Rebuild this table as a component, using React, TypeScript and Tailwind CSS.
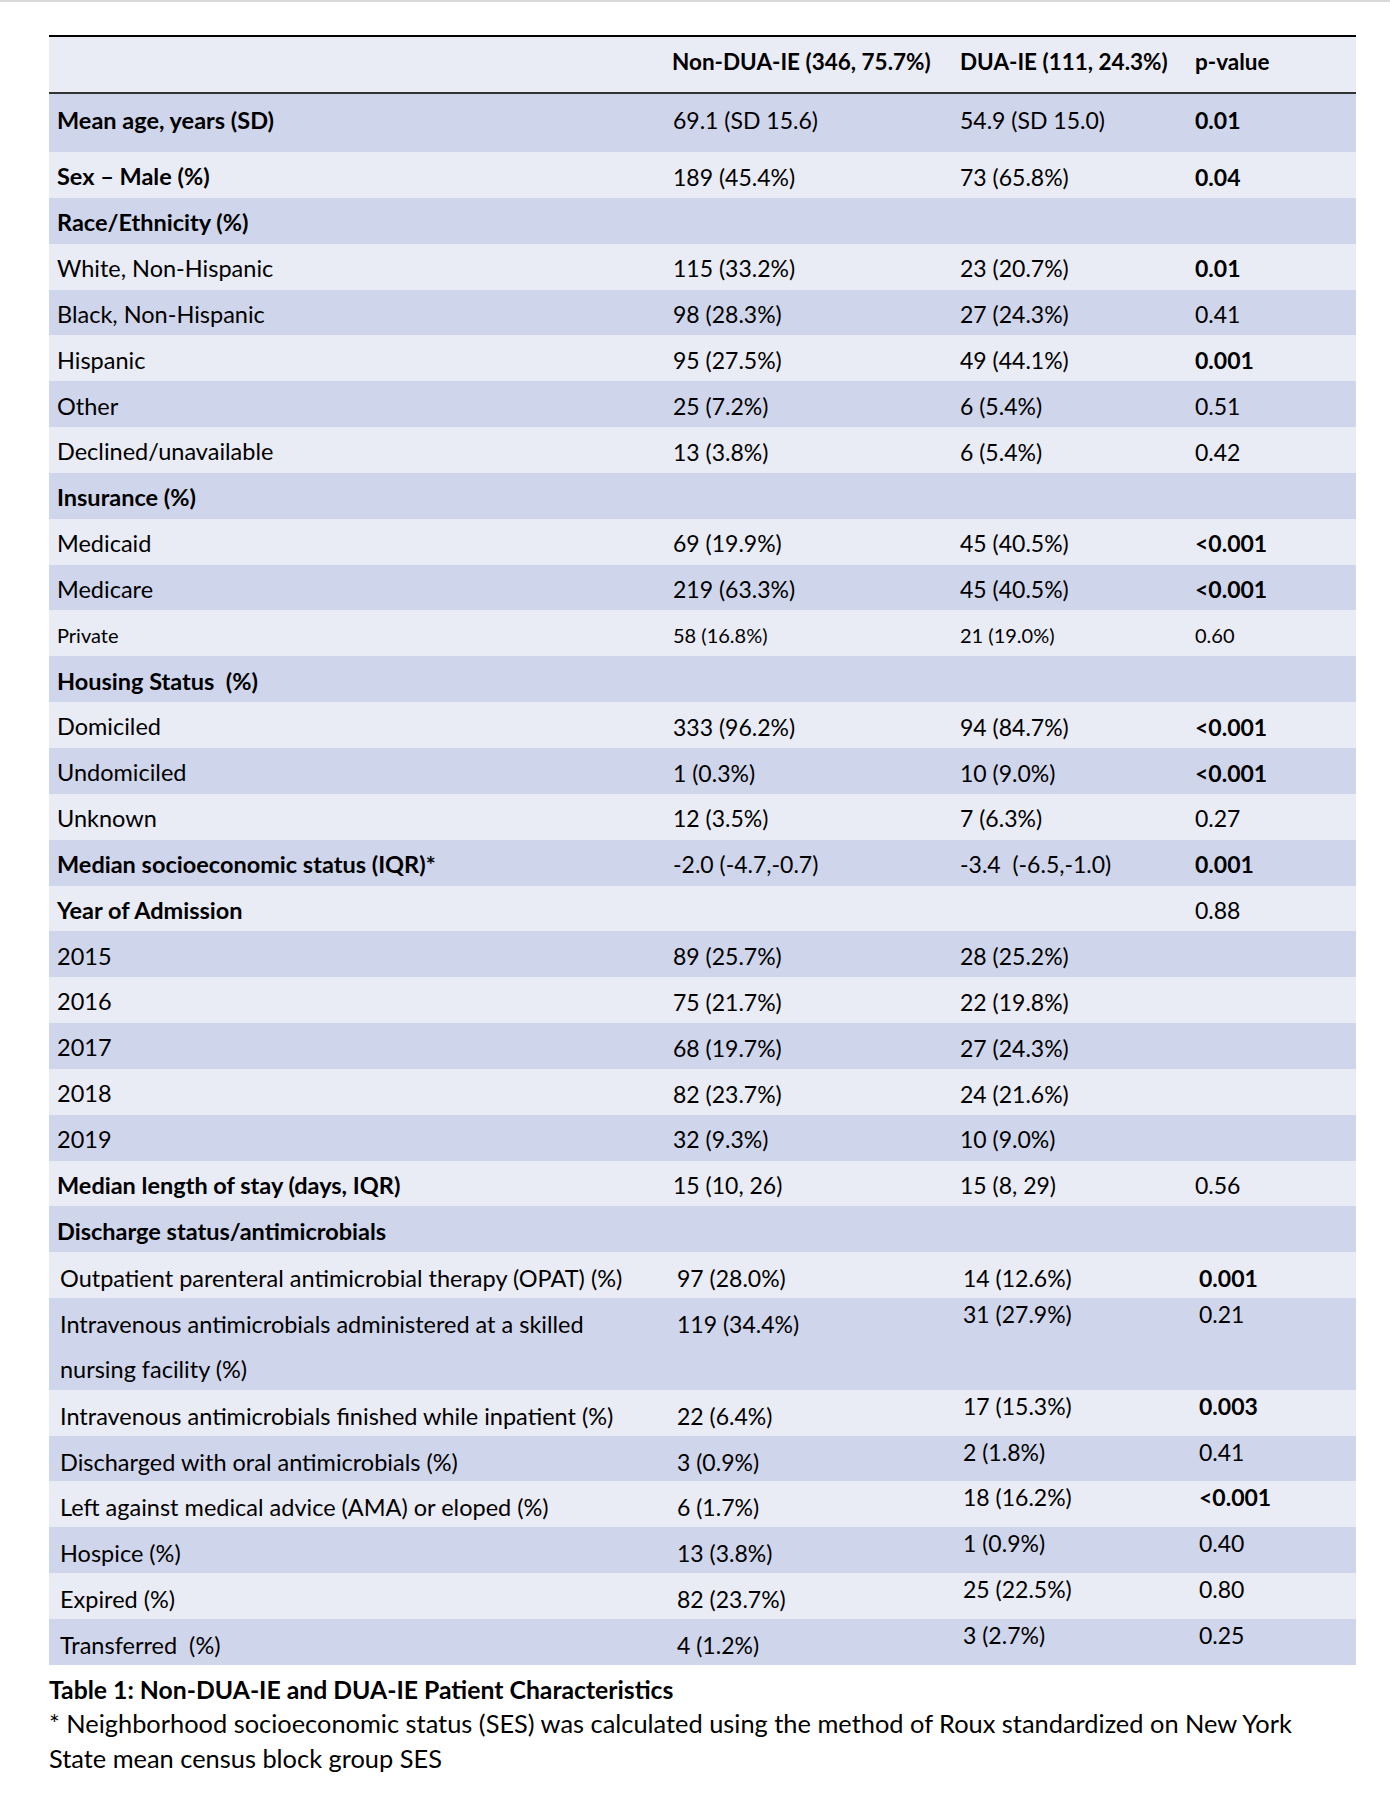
import React from "react";

type Row = {
  label: string;
  a?: string;
  b?: string;
  p?: string;
  boldLabel?: boolean;
  boldP?: boolean;
  small?: boolean;
};

const rows: Row[] = [
  { label: "Sex \u2013 Male (%)", a: "189 (45.4%)", b: "73 (65.8%)", p: "0.04", boldLabel: true, boldP: true },
  { label: "Race/Ethnicity (%)", boldLabel: true },
  { label: "White, Non-Hispanic", a: "115 (33.2%)", b: "23 (20.7%)", p: "0.01", boldP: true },
  { label: "Black, Non-Hispanic", a: "98 (28.3%)", b: "27 (24.3%)", p: "0.41" },
  { label: "Hispanic", a: "95 (27.5%)", b: "49 (44.1%)", p: "0.001", boldP: true },
  { label: "Other", a: "25 (7.2%)", b: "6 (5.4%)", p: "0.51" },
  { label: "Declined/unavailable", a: "13 (3.8%)", b: "6 (5.4%)", p: "0.42" },
  { label: "Insurance (%)", boldLabel: true },
  { label: "Medicaid", a: "69 (19.9%)", b: "45 (40.5%)", p: "<0.001", boldP: true },
  { label: "Medicare", a: "219 (63.3%)", b: "45 (40.5%)", p: "<0.001", boldP: true },
  { label: "Private", a: "58 (16.8%)", b: "21 (19.0%)", p: "0.60", small: true },
  { label: "Housing Status  (%)", boldLabel: true },
  { label: "Domiciled", a: "333 (96.2%)", b: "94 (84.7%)", p: "<0.001", boldP: true },
  { label: "Undomiciled", a: "1 (0.3%)", b: "10 (9.0%)", p: "<0.001", boldP: true },
  { label: "Unknown", a: "12 (3.5%)", b: "7 (6.3%)", p: "0.27" },
  { label: "Median socioeconomic status (IQR)*", a: "-2.0 (-4.7,-0.7)", b: "-3.4  (-6.5,-1.0)", p: "0.001", boldLabel: true, boldP: true },
  { label: "Year of Admission", p: "0.88", boldLabel: true },
  { label: "2015", a: "89 (25.7%)", b: "28 (25.2%)" },
  { label: "2016", a: "75 (21.7%)", b: "22 (19.8%)" },
  { label: "2017", a: "68 (19.7%)", b: "27 (24.3%)" },
  { label: "2018", a: "82 (23.7%)", b: "24 (21.6%)" },
  { label: "2019", a: "32 (9.3%)", b: "10 (9.0%)" },
  { label: "Median length of stay (days, IQR)", a: "15 (10, 26)", b: "15 (8, 29)", p: "0.56", boldLabel: true },
  { label: "Discharge status/antimicrobials", boldLabel: true },
];

type DRow = { label: string; a: string; b: string; p: string; boldP?: boolean; even?: boolean; tall?: boolean };

const discharge: DRow[] = [
  { label: "Outpatient parenteral antimicrobial therapy (OPAT) (%)", a: "97 (28.0%)", b: "14 (12.6%)", p: "0.001", boldP: true, even: true },
  { label: "Intravenous antimicrobials administered at a skilled nursing facility (%)", a: "119 (34.4%)", b: "31 (27.9%)", p: "0.21", tall: true },
  { label: "Intravenous antimicrobials finished while inpatient (%)", a: "22 (6.4%)", b: "17 (15.3%)", p: "0.003", boldP: true },
  { label: "Discharged with oral antimicrobials (%)", a: "3 (0.9%)", b: "2 (1.8%)", p: "0.41" },
  { label: "Left against medical advice (AMA) or eloped (%)", a: "6 (1.7%)", b: "18 (16.2%)", p: "<0.001", boldP: true },
  { label: "Hospice (%)", a: "13 (3.8%)", b: "1 (0.9%)", p: "0.40" },
  { label: "Expired (%)", a: "82 (23.7%)", b: "25 (22.5%)", p: "0.80" },
  { label: "Transferred  (%)", a: "4 (1.2%)", b: "3 (2.7%)", p: "0.25" },
];

const cols = "grid grid-cols-[616px_288px_235px_168px]";

function App() {
  return (
    <div className="min-h-[1801px] w-[1390px] bg-white text-black font-['Lato','Carlito',sans-serif]">
      <div className="h-[2px] w-full bg-[#d9d9d9]" />
      <div className="pl-[49px] pt-[33px]">
        <div className="w-[1307px] border-t-2 border-black">
          {/* header */}
          <div className={`${cols} h-[57px] items-center pb-[5px] bg-[#e9ebf5] border-b-2 border-[#333] text-[22.5px] font-bold`}>
            <div />
            <div className="pl-[7px]">Non-DUA-IE (346, 75.7%)</div>
            <div className="pl-[7px]">DUA-IE (111, 24.3%)</div>
            <div className="pl-[7px]">p-value</div>
          </div>
          <div className={`${cols} h-[58px] items-center pb-[5px] bg-[#cfd5ea] text-[23px]`}>
            <div className="pl-[8px] font-bold text-[23.5px]">Mean age, years (SD)</div>
            <div className="pl-[8px]">69.1 (SD 15.6)</div>
            <div className="pl-[7px]">54.9 (SD 15.0)</div>
            <div className="pl-[7px] font-bold">0.01</div>
          </div>
          {rows.map((r, i) => (
            <div
              key={i}
              className={`${cols} h-[45.85px] items-center pt-[4px] whitespace-pre ${i % 2 === 0 ? "bg-[#e9ebf5]" : "bg-[#cfd5ea]"} ${r.small ? "text-[20px]" : "text-[23px]"}`}
            >
              <div className={`pl-[8px] ${r.small ? "" : "text-[23.5px]"} ${r.boldLabel ? "font-bold" : ""}`}>{r.label}</div>
              <div className="pl-[8px]">{r.a}</div>
              <div className="pl-[7px]">{r.b}</div>
              <div className={`pl-[7px] ${r.boldP ? "font-bold" : ""}`}>{r.p}</div>
            </div>
          ))}
          {discharge.map((r, i) => (
            <div
              key={i}
              className={`${cols} ${r.tall ? "h-[91.7px]" : "h-[45.85px]"} items-start text-[23px] leading-[32px] ${i % 2 === 0 ? "bg-[#e9ebf5]" : "bg-[#cfd5ea]"}`}
            >
              {r.tall ? (
                <div className="pl-[11px] pt-[4px] leading-[45px] text-[23.5px]">
                  Intravenous antimicrobials administered at a skilled
                  <br />
                  nursing facility (%)
                </div>
              ) : (
                <div className="pl-[11px] pt-[10px] whitespace-pre text-[23.5px]">{r.label}</div>
              )}
              <div className="pl-[12px] pt-[10px]">{r.a}</div>
              <div className={`pl-[10px] ${r.even ? "pt-[10px]" : "pt-0"}`}>{r.b}</div>
              <div className={`pl-[11px] ${r.even ? "pt-[10px]" : "pt-0"} ${r.boldP ? "font-bold" : ""}`}>{r.p}</div>
            </div>
          ))}
        </div>
        <div className="mt-[9px] text-[24.75px] leading-[32px] font-bold">
          Table 1: Non-DUA-IE and DUA-IE Patient Characteristics
        </div>
        <div className="text-[25.4px] leading-[35px]">
          * Neighborhood socioeconomic status (SES) was calculated using the method of Roux standardized on New York
          <br />
          State mean census block group SES
        </div>
      </div>
    </div>
  );
}

export default App;
